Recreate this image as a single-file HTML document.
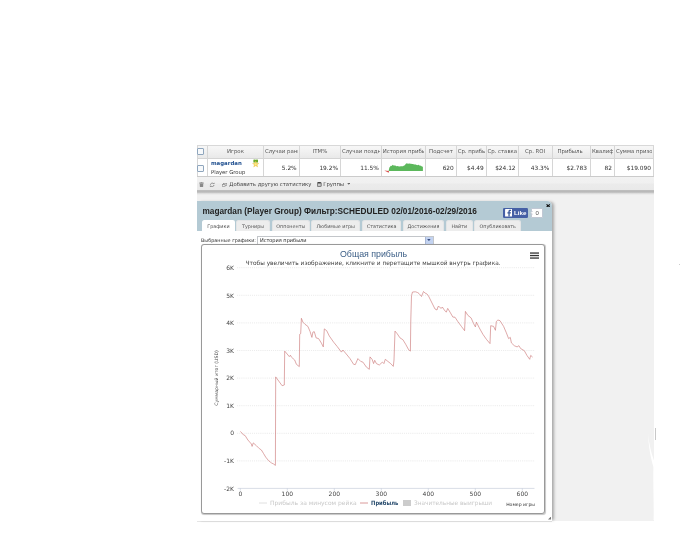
<!DOCTYPE html>
<html><head><meta charset="utf-8">
<style>
html,body{margin:0;padding:0;background:#fff;}
body{will-change:transform;width:700px;height:545px;position:relative;overflow:hidden;font-family:"DejaVu Sans","Liberation Sans",sans-serif;color:#333;}
.abs{position:absolute;}
#graybg{left:197px;top:145px;width:457px;height:375.5px;background:#f1f1f1;}
#tbl{left:197px;top:146.6px;width:457px;height:29.4px;background:#fff;box-sizing:border-box;}
#thead{left:0;top:0;width:457px;height:12.9px;background:linear-gradient(#f6f6f6,#e9e9e9);border-bottom:1px solid #d4d4d4;box-sizing:border-box;}
.vl{position:absolute;top:-1px;width:1px;height:30.4px;background:#d6d6d6;}
.th{position:absolute;top:0.6px;height:8px;font-size:5.4px;line-height:8px;text-align:center;color:#555;white-space:nowrap;overflow:hidden;}
.td{position:absolute;top:17px;height:8px;font-size:5.85px;line-height:8px;text-align:right;color:#333;white-space:nowrap;}
#tbar{left:197px;top:176px;width:457px;height:15px;background:linear-gradient(#f2f2f2 0,#f0f0f0 46%,#ebebeb 54%,#e9e9e9 100%);border-top:1px solid #cbcbcb;border-bottom:1px solid #bdbdbd;box-sizing:border-box;font-size:5.3px;line-height:14px;color:#444;white-space:nowrap;}
.cb{position:absolute;width:7px;height:7px;border:1px solid #8fa6bd;background:#f7f9fb;box-sizing:border-box;border-radius:1px;}
#dlg{left:197px;top:201px;width:355px;height:319.8px;background:#fff;border-radius:0 5px 0 0;box-shadow:3px 0 3px -1px rgba(0,0,0,.3),0 1px 0 rgba(0,0,0,.1);}
#dhead{left:0;top:0;width:355px;height:30px;background:#b4cad4;border-radius:0 5px 0 0;}
#dtitle{transform:scaleY(1.1);transform-origin:0 50%;left:5.5px;top:4.5px;font-family:"Liberation Sans",sans-serif;font-weight:bold;font-size:8.27px;line-height:12px;color:#222;white-space:nowrap;}
.tab{position:absolute;top:18.9px;height:11.1px;background:#ededed;border:1px solid #e3e5e6;border-bottom:none;box-sizing:border-box;border-radius:2.5px 2.5px 0 0;font-size:4.85px;line-height:11px;text-align:center;color:#555;white-space:nowrap;}
.tab.act{background:#fff;height:11.6px;border-color:#fff;}
#panel{left:3.9px;top:42.9px;width:344.2px;height:269.7px;border:1px solid #999;border-radius:3px;box-sizing:border-box;background:#fff;box-shadow:0.3px 0.5px 0.8px rgba(0,0,0,.22);}
</style></head><body>
<div id="graybg" class="abs"></div>

<div id="tbl" class="abs">
  <div id="thead" class="abs"></div>
  <div class="abs" style="left:0;top:-1.5px;width:457px;height:1px;background:#d8d8d8"></div><div class="abs" style="left:0;top:-0.5px;width:457px;height:1px;background:#f6f6f6"></div>
  <div class="vl" style="left:0.0px"></div>
  <div class="vl" style="left:9.9px"></div>
  <div class="vl" style="left:66.1px"></div>
  <div class="vl" style="left:101.8px"></div>
  <div class="vl" style="left:143.1px"></div>
  <div class="vl" style="left:183.9px"></div>
  <div class="vl" style="left:228.0px"></div>
  <div class="vl" style="left:258.9px"></div>
  <div class="vl" style="left:288.9px"></div>
  <div class="vl" style="left:320.7px"></div>
  <div class="vl" style="left:354.5px"></div>
  <div class="vl" style="left:393.1px"></div>
  <div class="vl" style="left:417.1px"></div>
  <div class="vl" style="left:456.0px"></div>
  <div class="cb" style="left:0.3px;top:1.5px"></div>
  <div class="cb" style="left:0.3px;top:18.8px"></div>
  <div class="th" style="left:10.9px;width:55.2px">Игрок</div>
  <div class="th" style="left:67.9px;width:33.3px;text-align:left">Случаи ранн</div>
  <div class="th" style="left:102.8px;width:40.3px">ITM%</div>
  <div class="th" style="left:144.9px;width:38.4px;text-align:left">Случаи поздн</div>
  <div class="th" style="left:185.7px;width:41.7px;text-align:left">История прибы</div>
  <div class="th" style="left:229.0px;width:29.9px">Подсчет</div>
  <div class="th" style="left:260.7px;width:27.6px;text-align:left">Ср. прибы</div>
  <div class="th" style="left:289.9px;width:30.8px">Ср. ставка</div>
  <div class="th" style="left:321.7px;width:32.8px">Ср. ROI</div>
  <div class="th" style="left:354.3px;width:37.6px">Прибыль</div>
  <div class="th" style="left:394.9px;width:21.6px;text-align:left">Квалиф</div>
  <div class="th" style="left:418.9px;width:36.5px;text-align:left">Сумма призо</div>
  <div class="td" style="left:67.1px;width:32.6px">5.2%</div>
  <div class="td" style="left:102.8px;width:38.2px">19.2%</div>
  <div class="td" style="left:144.1px;width:37.7px">11.5%</div>
  <div class="td" style="left:229.0px;width:27.8px">620</div>
  <div class="td" style="left:259.9px;width:26.9px">$4.49</div>
  <div class="td" style="left:289.9px;width:28.7px">$24.12</div>
  <div class="td" style="left:321.7px;width:30.7px">43.3%</div>
  <div class="td" style="left:355.5px;width:34.5px">$2.783</div>
  <div class="td" style="left:394.1px;width:20.9px">82</div>
  <div class="td" style="left:418.1px;width:35.8px">$19.090</div>
  <div class="abs" style="left:14px;top:12.2px;font-size:5.4px;line-height:8px;font-weight:bold;color:#1f4f8f;white-space:nowrap">magardan</div>
  <div class="abs" style="left:14px;top:21.7px;font-size:5.3px;line-height:8px;color:#333;white-space:nowrap">Player Group</div>
  <svg class="abs" style="left:55px;top:12.5px" width="7.4" height="9.6" viewBox="0 0 8 10"><path d="M1.5 0.5 Q2.7 0 4 0.7 Q5.3 0 6.5 0.5 V3.6 H1.5 Z" fill="#6aaa2a"/><path d="M4 2 L4.95 4.4 L7.5 4.55 L5.5 6.1 L6.2 8.5 L4 7.1 L1.8 8.5 L2.5 6.1 L0.5 4.55 L3.05 4.4 Z" fill="#f7d65a" stroke="#e3b53a" stroke-width="0.3"/><circle cx="4" cy="5.4" r="1.1" fill="#fbe98e"/></svg>
  <svg class="abs" style="left:187px;top:16.5px" width="42" height="10" viewBox="384 163 42 10"><path d="M388.6 170.9 L389.4 167.5 L390.8 165.8 L391.6 166 L392.7 164.7 L393.6 165.4 L395.3 165.6 L396.4 166.2 L397.5 165.9 L399.1 166.5 L401 166.3 L403 166.3 L404 165.4 L404.9 165.2 L405.6 164 L406.8 163.2 L408 163.7 L409.3 163.4 L410.7 163.8 L412.6 164 L414.6 164.6 L415.8 164.4 L417.1 165.2 L418.4 164.7 L419.5 165.5 L421 165.7 L421.9 166.5 L422.9 166.7 L422.9 170.9 Z" fill="#5cb85c"/><path d="M384.3 170.5 L389.1 170.9 L388.6 172.8 Z" fill="#d9534f"/></svg>
</div>

<div id="tbar" class="abs">
  <svg class="abs" style="left:2px;top:4.8px" width="5" height="5.6" viewBox="0 0 5 5.6"><path d="M0.7 1.6 H4.3 L4.1 5 Q4.1 5.5 3.6 5.5 H1.4 Q0.9 5.5 0.9 5 Z" fill="#8a8a8a"/><rect x="0.2" y="0.6" width="4.6" height="0.8" rx="0.3" fill="#8a8a8a"/><rect x="1.7" y="0" width="1.6" height="0.7" fill="#8a8a8a"/></svg>
  <svg class="abs" style="left:12.4px;top:4.7px" width="6.4" height="5.8" viewBox="0 0 6 5.6"><path d="M1.3 2.6 A1.8 1.6 0 0 1 4.4 1.6 M4.7 3 A1.8 1.6 0 0 1 1.6 4" fill="none" stroke="#808080" stroke-width="0.85"/><path d="M3.6 1.9 L5.4 1.9 L5.0 0.4 Z M2.4 3.7 L0.6 3.7 L1.0 5.2 Z" fill="#8c8c8c"/></svg>
  <svg class="abs" style="left:24.5px;top:5.8px" width="5.4" height="4.4" viewBox="0 0 6 5"><rect x="1.8" y="0.4" width="3.6" height="2.6" fill="none" stroke="#888" stroke-width="0.7"/><rect x="0.4" y="1.8" width="3" height="2.4" fill="#f2f2f2" stroke="#888" stroke-width="0.7"/></svg>
  <span class="abs" style="left:32.3px;top:0">Добавить другую статистику</span>
  <svg class="abs" style="left:120.2px;top:4.8px" width="4.6" height="4.8" viewBox="0 0 4.6 4.8"><rect x="0.3" y="0.5" width="4" height="4" rx="0.5" fill="#9a9a9a" stroke="#555" stroke-width="0.6"/><rect x="0.9" y="0" width="2.8" height="1.2" fill="#444"/><rect x="1.1" y="2.2" width="2.4" height="1.5" fill="#ddd"/></svg>
  <span class="abs" style="left:126.2px;top:0">Группы</span>
  <svg class="abs" style="left:149.8px;top:5.9px" width="3.4" height="2.3" viewBox="0 0 4 3"><path d="M0 0 H4 L2 2.4 Z" fill="#666"/></svg>
</div>
<div class="abs" style="left:197px;top:191px;width:457px;height:4px;background:linear-gradient(rgba(0,0,0,.25),rgba(0,0,0,.2) 35%,rgba(0,0,0,.07) 65%,rgba(0,0,0,0))"></div>

<div id="dlg" class="abs">
  <div id="dhead" class="abs"></div>
  <div id="dtitle" class="abs">magardan (Player Group) Фильтр:SCHEDULED 02/01/2016-02/29/2016</div>
  <div class="abs" style="left:305.8px;top:6.7px;width:25.2px;height:10px;background:#4560a5;border-radius:1.2px;"></div>
  <svg class="abs" style="left:307.5px;top:8px" width="7.3" height="7.6" viewBox="0 0 8 8.5"><rect x="0" y="0" width="8" height="8.5" fill="#fff" rx="0.6"/><path d="M5.2 8.5 V5 H6.4 L6.6 3.6 H5.2 V2.8 C5.2 2.3 5.4 2.1 5.9 2.1 H6.7 V0.8 C6.4 0.75 5.9 0.7 5.5 0.7 C4.4 0.7 3.7 1.4 3.7 2.6 V3.6 H2.6 V5 H3.7 V8.5 Z" fill="#3b5998"/></svg>
  <div class="abs" style="left:317px;top:6.7px;font-family:'Liberation Sans',sans-serif;font-weight:bold;font-size:6.2px;line-height:10.4px;color:#fff">Like</div>
  <div class="abs" style="left:334.4px;top:6.8px;width:11.6px;height:10.2px;background:#fff;border:1px solid #c1c8d4;box-sizing:border-box;border-radius:1px;font-family:'Liberation Sans',sans-serif;font-size:6px;line-height:8.8px;text-align:center;color:#555">0</div>
  <svg class="abs" style="left:332.8px;top:10px" width="3" height="3.6" viewBox="0 0 3.5 4"><path d="M3.5 0 L0.5 2 L3.5 4" fill="#fff" stroke="#c1c8d4" stroke-width="0.7"/></svg>
  <svg class="abs" style="left:348.6px;top:2.8px" width="4.4" height="3.6" viewBox="0 0 5 5" preserveAspectRatio="none"><path d="M0.6 0.6 L4.4 4.4 M4.4 0.6 L0.6 4.4" stroke="#111" stroke-width="1.3"/></svg>

  <div class="tab act" style="left:5.2px;width:32.4px">Графики</div>
  <div class="tab" style="left:39.1px;width:34px">Турниры</div>
  <div class="tab" style="left:74.6px;width:38.4px">Оппоненты</div>
  <div class="tab" style="left:114.4px;width:48.6px">Любимые игры</div>
  <div class="tab" style="left:164.8px;width:39.6px">Статистика</div>
  <div class="tab" style="left:205.8px;width:41.2px">Достижения</div>
  <div class="tab" style="left:248.6px;width:27.4px">Найти</div>
  <div class="tab" style="left:277.4px;width:46.6px">Опубликовать</div>

  <div class="abs" style="left:4px;top:35px;font-size:4.9px;line-height:8px;color:#333;white-space:nowrap">Выбранные графики:</div>
  <div class="abs" style="left:60.4px;top:35px;width:176.6px;height:8.5px;border:1px solid #c3c6ca;box-sizing:border-box;background:#fff;font-size:5px;line-height:6.5px;color:#222;padding-left:1.5px;white-space:nowrap">История прибыли</div>
  <div class="abs" style="left:227.8px;top:35.5px;width:8.7px;height:7.5px;background:#c3d3f1;border-left:1px solid #a9b8d6;box-sizing:border-box"></div>
  <svg class="abs" style="left:230.3px;top:38px" width="3.8" height="2.2" viewBox="0 0 4 2.5"><path d="M0 0 H4 L2 2.4 Z" fill="#3a4f80"/></svg>

  <div id="panel" class="abs"></div>
</div>

<svg class="abs" style="left:0;top:0" width="700" height="545" viewBox="0 0 700 545" font-family="DejaVu Sans, Liberation Sans, sans-serif">
  <g stroke="#d0d0d0" stroke-width="0.6" stroke-dasharray="0.7 1.2">
    <path d="M237 267.7H534.5 M237 295.3H534.5 M237 322.9H534.5 M237 350.5H534.5 M237 378.1H534.5 M237 405.7H534.5 M237 433.3H534.5 M237 460.9H534.5"/>
  </g>
  <path d="M237.6 488.4H534.5" stroke="#c8d0dc" stroke-width="0.7"/>
  <path d="M240.3 488.4v2.2M287.3 488.4v2.2M334.3 488.4v2.2M381.3 488.4v2.2M428.3 488.4v2.2M475.3 488.4v2.2M522.3 488.4v2.2" stroke="#c0c8d8" stroke-width="0.6"/>
  <text x="340" y="257" font-size="9.6" fill="#3a5d85" font-family="Liberation Sans, sans-serif" textLength="67" lengthAdjust="spacingAndGlyphs">Общая прибыль</text>
  <text x="245.6" y="264.6" font-size="6" fill="#3e3e3e" textLength="255" lengthAdjust="spacingAndGlyphs">Чтобы увеличить изображение, кликните и перетащите мышкой внутрь графика.</text>
  <g font-size="6" fill="#444" text-anchor="end">
    <text x="234" y="270">6K</text><text x="234" y="297.6">5K</text><text x="234" y="325.2">4K</text><text x="234" y="352.7">3K</text><text x="234" y="380.3">2K</text><text x="234" y="407.9">1K</text><text x="234" y="435.4">0</text><text x="234" y="463">-1K</text><text x="234" y="490.6">-2K</text>
  </g>
  <g font-size="6" fill="#444" text-anchor="middle">
    <text x="240.3" y="495.6">0</text><text x="287.3" y="495.6">100</text><text x="334.3" y="495.6">200</text><text x="381.3" y="495.6">300</text><text x="428.3" y="495.6">400</text><text x="475.3" y="495.6">500</text><text x="522.3" y="495.6">600</text>
  </g>
  <text transform="translate(218 378) rotate(-90)" font-size="4.6" fill="#444" text-anchor="middle">Суммарный итог (USD)</text>
  <text x="535" y="506" font-size="4.6" fill="#333" text-anchor="end">Номер игры</text>
  <path d="M259 503H267" stroke="#d8d8d8" stroke-width="0.8"/>
  <text x="270" y="505.3" font-size="6" fill="#c8c8c8">Прибыль за минусом рейка</text>
  <path d="M360 503H368" stroke="#d08080" stroke-width="0.8"/>
  <text x="371" y="505.3" font-size="6" font-weight="bold" fill="#274b6d" textLength="27.3" lengthAdjust="spacingAndGlyphs">Прибыль</text>
  <rect x="403" y="500" width="8" height="6" fill="#ccc"/>
  <text x="414" y="505.3" font-size="6" fill="#c8c8c8" textLength="78" lengthAdjust="spacingAndGlyphs">Значительные выигрыши</text>
  <g fill="#333"><rect x="530" y="252.4" width="9" height="1.3"/><rect x="530" y="254.9" width="9" height="1.3"/><rect x="530" y="257.4" width="9" height="1.3"/></g>
  <polyline fill="none" stroke="#cc7b7b" stroke-width="0.66" stroke-linejoin="round" points="240.4,431.4 243.6,435 245,435.4 247.9,440 251.4,444 252.1,446.4 253.3,442.9 256.4,445.7 259.3,448.6 261.4,450 263.6,453.6 265.7,457.1 268.6,460.7 271.4,462.9 273.6,464 275.4,465.4 275.7,376.9 282.1,385.7 284.3,385 284.7,351.1 289.3,356.6 290.4,355.2 291.4,357.1 294.7,360 296.4,364.3 299.3,366.6 299.7,334.3 300.7,333.6 301.4,318.3 302.9,322.1 305,324.3 307.9,326.4 310,331.4 311.9,337.4 312.9,332.1 314.3,331.7 316.1,337.9 318.6,338.6 321.4,343.1 323.3,346.9 324.3,328.9 326.7,330.7 329.3,336 333.6,342.1 337.1,346.4 341.4,352.1 342.9,350 347.1,355 350,358.6 353.6,364.3 355.3,364.6 357.9,358.6 360.7,361.4 362.9,362.1 366.4,367.1 369.3,369.3 370,356.9 372.1,359.3 373.6,363.6 374.7,360.3 376.4,363.6 379.3,365 382.4,362.1 383.9,363.6 385.3,359.3 387.9,361.4 390.7,363.6 393.3,366.4 394,360 395,331.1 397.1,333.6 400,337.9 402.9,339.7 405.7,344.3 408.6,349.7 410.4,351.1 410.8,320 411.5,295.5 412.5,292 415.5,291.8 417.5,292.5 419,293.5 421.5,296.5 423.5,291.5 425,293 427,294 428.5,296 431.5,302 435,309 437,310 438,306.5 439.5,306.8 441,308.5 442.3,307 444.3,310 446.3,312.2 447.7,308.4 450,312.1 452.9,317.1 455,317.2 457.9,321.7 461.4,326.4 464.6,330.7 465.4,311.4 467.9,315.4 471.1,317.9 473.6,323.6 475.4,326.9 476.4,322.1 479.3,327.9 482.9,334.3 486.4,339.3 490,343.6 490.7,325.7 493.6,326.4 495.4,330.3 496.4,321.4 497.9,320 500,320.7 503.6,326.4 506.4,332.9 508.6,338.6 510.3,337.4 511.4,342.9 514.3,345.7 517.1,346.9 518.9,345.7 520.7,348.6 524.3,350.7 527.1,355.7 529.7,359.3 530.7,355.4 532.6,357.1"/>
</svg>
<svg class="abs" style="left:547.6px;top:516.4px" width="3.6" height="3.6" viewBox="0 0 6 6"><path d="M6 0 V6 H0 Z" fill="#777"/></svg>
<div class="abs" style="left:655px;top:427.5px;width:0.8px;height:12px;background:#c8c8c8"></div>
<div class="abs" style="left:678.5px;top:263.5px;width:1px;height:1px;background:#ccc"></div>
<svg class="abs" style="left:640px;top:425px" width="20" height="100" viewBox="0 0 20 100"><path d="M8 8 C9 20 12 30 14.2 36 L14.2 95 L13.6 95 C14 80 13 60 13.4 42 C11 34 8.5 22 8 8 Z" fill="#fff"/></svg>
</body></html>
